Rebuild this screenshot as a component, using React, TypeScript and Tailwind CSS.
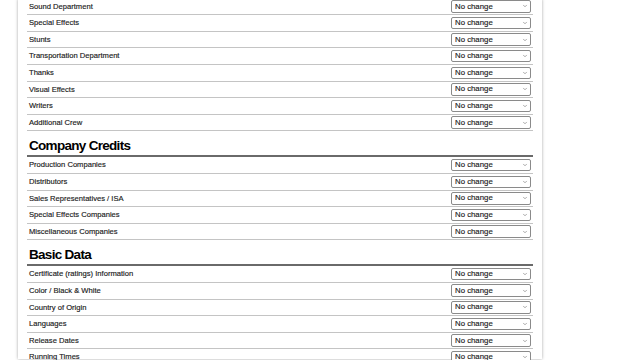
import { ChevronDown } from "lucide-react"

const sections: { title?: string; rows: string[] }[] = [
  {
    rows: [
      "Sound Department",
      "Special Effects",
      "Stunts",
      "Transportation Department",
      "Thanks",
      "Visual Effects",
      "Writers",
      "Additional Crew",
    ],
  },
  {
    title: "Company Credits",
    rows: [
      "Production Companies",
      "Distributors",
      "Sales Representatives / ISA",
      "Special Effects Companies",
      "Miscellaneous Companies",
    ],
  },
  {
    title: "Basic Data",
    rows: [
      "Certificate (ratings) Information",
      "Color / Black & White",
      "Country of Origin",
      "Languages",
      "Release Dates",
      "Running Times",
    ],
  },
]

function ChangeSelect() {
  return (
    <div className="flex h-[12.5px] w-[80px] items-center justify-between rounded-[2px] border border-[#8a8a8a] bg-white pl-[3px] pr-[2px] text-[7.8px] leading-none text-[#1a1a1a] [-webkit-text-stroke:0.15px_#1a1a1a]">
      <span>No change</span>
      <ChevronDown className="h-[6px] w-[6px] text-[#555]" strokeWidth={2} />
    </div>
  )
}

export default function App() {
  return (
    <main className="h-[360px] w-[640px] overflow-hidden bg-white font-['Liberation_Sans',Arial,sans-serif]">
      <div className="ml-[18px] h-full w-[524px] px-[9px] shadow-[0_0_3px_rgba(0,0,0,0.35)]">
        <div className="-mt-[1.4px]">
          {sections.map((section, sIdx) => (
            <section key={sIdx}>
              {section.title && (
                <h2 className="border-b-2 border-[#6a6a6a] px-[2px] pb-[1px] pt-[7px] text-[13.5px] font-bold leading-[16px] tracking-[-0.7px] text-black">
                  {section.title}
                </h2>
              )}
              {section.rows.map((row) => (
                <div
                  key={row}
                  className="flex h-[16.6px] items-center justify-between border-b border-[#c4c4c4] pl-[2px] pr-[2px]"
                >
                  <span className="text-[7.6px] leading-none text-[#1a1a1a] [-webkit-text-stroke:0.15px_#1a1a1a]">
                    {row}
                  </span>
                  <ChangeSelect />
                </div>
              ))}
            </section>
          ))}
        </div>
      </div>
    </main>
  )
}
